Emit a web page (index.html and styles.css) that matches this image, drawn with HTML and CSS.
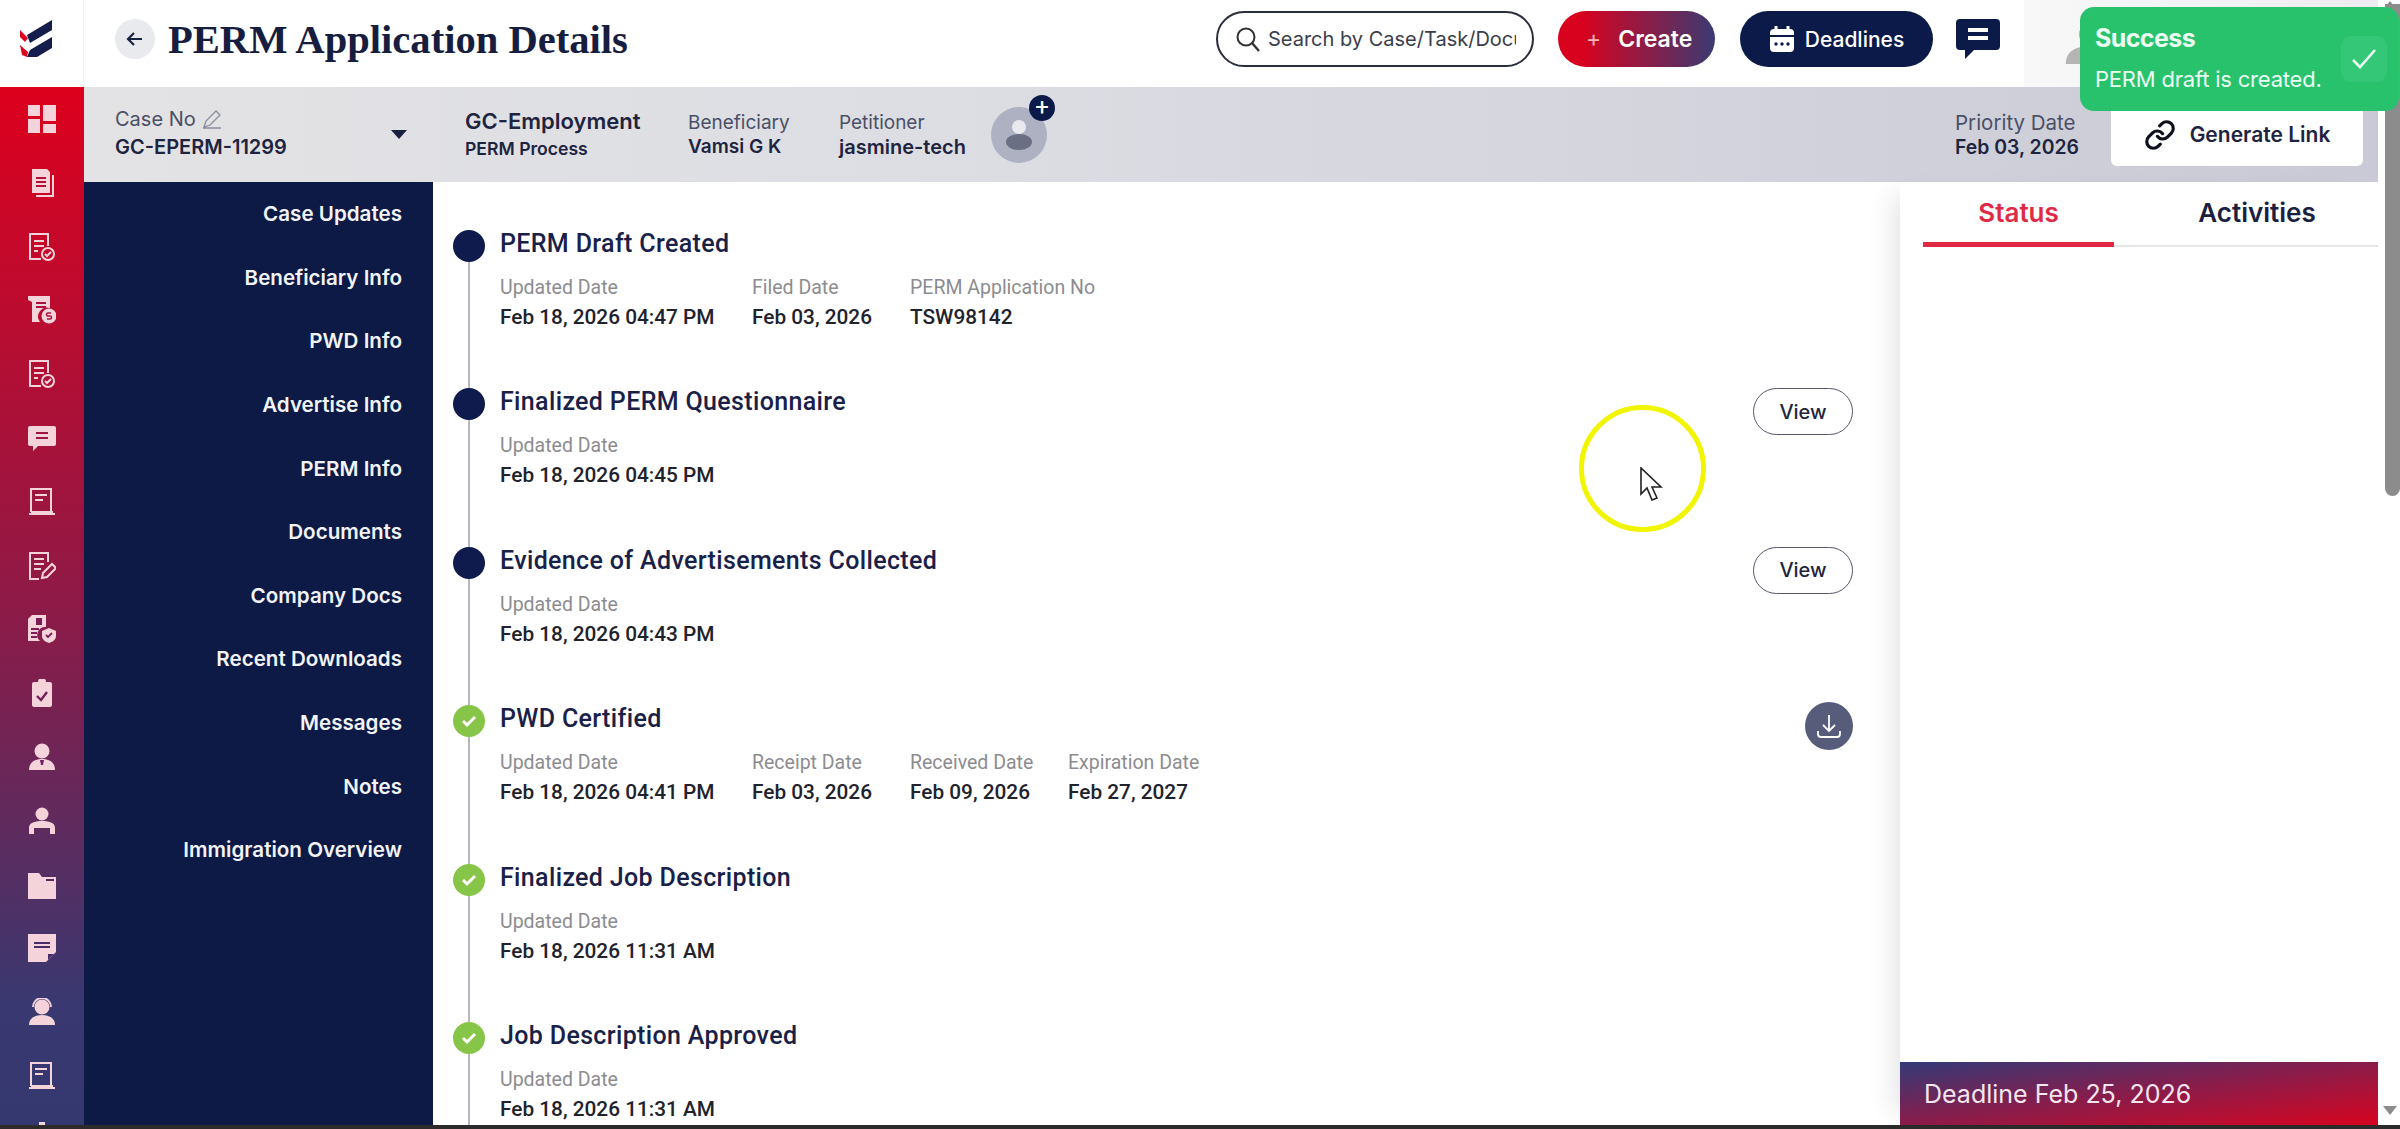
FILE: index.html
```html
<!DOCTYPE html>
<html lang="en">
<head>
    <meta charset="UTF-8">
    <title>PERM Application Details</title>
    <link rel="stylesheet" href="styles.css">
</head>
<body>
    <div class="shell">
        <div class="app">
            <div class="topbar">
                <div class="logo">
                    <svg width="36" height="42" viewBox="8 8 36 42">
                        <path d="M17 25L42 10V20L20 33Z" fill="#141d4c"/>
                        <path d="M20 40L42 27V38L27 47H17Z" fill="#141d4c"/>
                        <path d="M10 20L18 28L15 32L10 27Z" fill="#e0051f"/>
                        <path d="M10 35L18 42L17 47L12 45Z" fill="#e0051f"/>
                    </svg>
                </div>
                <div class="header">
                    <button class="back">
                        <svg width="20" height="20" viewBox="0 0 20 20"><path d="M17 10H4M9 4l-6 6 6 6" fill="none" stroke="#1a2244" stroke-width="2.2"/></svg>
                    </button>
                    <h1>PERM Application Details</h1>
                    <div class="search">
                        <svg width="28" height="28" viewBox="0 0 28 28"><circle cx="12" cy="12" r="8.5" fill="none" stroke="#333" stroke-width="2"/><path d="M18 18l7 8" stroke="#333" stroke-width="2.4"/></svg>
                        <span>Search by Case/Task/Docu</span>
                    </div>
                    <button class="btn-create"><span class="plus">+</span>Create</button>
                    <button class="btn-deadlines">
                        <svg width="26" height="28" viewBox="0 0 26 28"><path d="M7 1v4M19 1v4" stroke="#fff" stroke-width="3"/><rect x="1" y="4" width="24" height="23" rx="4" fill="#fff"/><rect x="1" y="10" width="24" height="2" fill="#0c1a4a"/><circle cx="7" cy="19" r="1.7" fill="#0c1a4a"/><circle cx="13" cy="19" r="1.7" fill="#0c1a4a"/><circle cx="19" cy="19" r="1.7" fill="#0c1a4a"/></svg>
                        Deadlines
                    </button>
                    <svg class="chat" width="44" height="40" viewBox="0 0 44 40"><path d="M4 0H40a4 4 0 0 1 4 4V27a4 4 0 0 1-4 4H18L9 40V31H4a4 4 0 0 1-4-4V4A4 4 0 0 1 4 0Z" fill="#0c1a4a"/><path d="M12 11H32M12 19H32" stroke="#fff" stroke-width="4"/></svg>
                    <div class="user">
                        <svg width="44" height="40" viewBox="0 0 50 46"><circle cx="30" cy="12" r="11" fill="#b5b5b5"/><path d="M4 46c0-14 10-20 26-20s20 6 20 20Z" fill="#b5b5b5"/></svg>
                    </div>
                </div>
            </div>
            <div class="below">
                <nav class="rail">
                    <svg class="ic" viewBox="0 0 28 28"><rect x="0" y="0" width="12" height="11"/><rect x="0" y="14" width="12" height="14"/><rect x="15" y="0" width="13" height="16"/><rect x="15" y="19" width="13" height="9"/></svg>
                    <svg class="ic" viewBox="0 0 28 28"><path d="M4 0H19L22 3V24H4Z"/><path d="M24 6h2V28H8v-2H24Z"/><path d="M8 9H18M8 13H18M8 17H18" stroke="#b5103a" stroke-width="2"/></svg>
                    <svg class="ic ln" viewBox="0 0 28 28"><path d="M20 13V1H2V26H13"/><path d="M6 8H16M6 13H16M6 18H10"/><circle cx="20" cy="21" r="6"/><path d="M17 21l2 2 4-4"/></svg>
                    <svg class="ic" viewBox="0 0 28 28"><path d="M0 0H22V12A9 9 0 0 0 12 26H4V6L0 4Z"/><path d="M8 7H18M8 11H18" stroke="#a81340" stroke-width="2"/><circle cx="21" cy="20" r="7.5"/><path d="M23 17h-3a1.500 1.500 0 0 0 0 3h2a1.500 1.500 0 0 1 0 3h-3" fill="none" stroke="#a81340" stroke-width="1.500"/></svg>
                    <svg class="ic ln" viewBox="0 0 28 28"><path d="M20 13V1H2V26H13"/><path d="M6 8H16M6 13H16M6 18H10"/><circle cx="20" cy="21" r="6"/><path d="M17 21l2 2 4-4"/></svg>
                    <svg class="ic" viewBox="0 0 28 28"><path d="M2 2H26a2 2 0 0 1 2 2V20a2 2 0 0 1-2 2H10L5 27V22H2a2 2 0 0 1-2-2V4A2 2 0 0 1 2 2Z"/><path d="M8 9H20M8 14H20" stroke="#9a1745" stroke-width="2"/></svg>
                    <svg class="ic ln" viewBox="0 0 28 28"><path d="M3 24V1H23V23"/><path d="M7 7H19M7 12H15"/><path d="M1 26H27M3 24H25"/></svg>
                    <svg class="ic ln" viewBox="0 0 28 28"><path d="M20 10V1H2V27H11"/><path d="M6 7H16M6 12H16M6 17H13"/><path d="M14 26l1-5 9-9 4 4-9 9Z"/></svg>
                    <svg class="ic" viewBox="0 0 28 28"><path d="M0 4L4 0H18V12A8 8 0 0 0 12 26H0Z"/><rect x="8" y="3" width="6" height="7" fill="#7e1d55"/><path d="M3 14H11M3 18H9M3 22H9" stroke="#7e1d55" stroke-width="1.800"/><path d="M21 13l7 3v5c0 4-4 6-7 7-3-1-7-3-7-7v-5Z"/><path d="M18 20l2 2 4-4" fill="none" stroke="#7e1d55" stroke-width="1.800"/></svg>
                    <svg class="ic" viewBox="0 0 28 28"><path d="M6 3H10a4 4 0 0 1 8 0H22a2 2 0 0 1 2 2V26a2 2 0 0 1-2 2H6a2 2 0 0 1-2-2V5A2 2 0 0 1 6 3Z"/><path d="M9 17l4 4 6-8" fill="none" stroke="#751f5a" stroke-width="2.400"/></svg>
                    <svg class="ic" viewBox="0 0 28 28"><circle cx="14" cy="8" r="7.500"/><path d="M1 27c0-8 6-11 13-11s13 3 13 11Z"/><path d="M12 17h4l-1 5h-2Z" fill="#6f2260"/></svg>
                    <svg class="ic" viewBox="0 0 28 28"><circle cx="14" cy="7" r="6.500"/><path d="M1 27V21c0-5 5-7 13-7s13 2 13 7v6H22V21H6v6Z"/></svg>
                    <svg class="ic" viewBox="0 0 28 28"><path d="M0 2H11L14 6H28V28H0Z"/><path d="M18 9H26" stroke="#5d2665" stroke-width="2"/></svg>
                    <svg class="ic" viewBox="0 0 28 28"><path d="M0 0H28V18L18 28H0Z"/><path d="M6 9H22M6 13H22" stroke="#4a2c6a" stroke-width="2"/><path d="M20 20h6l-6 6Z" fill="#4a2c6a"/></svg>
                    <svg class="ic" viewBox="0 0 28 28"><circle cx="14" cy="9" r="7.500"/><path d="M5 9a9 9 0 0 1 18 0" fill="none" stroke="#f3d3dc" stroke-width="2"/><path d="M1 27c0-7 6-10 13-10s13 3 13 10Z"/></svg>
                    <svg class="ic ln" viewBox="0 0 28 28"><path d="M3 24V1H23V23"/><path d="M7 7H19M7 12H15"/><path d="M1 26H27M3 24H25"/></svg>
                    <svg class="ic last" viewBox="0 0 28 28"><path d="M11 0h6v3h7v4H4V3h7Z"/></svg>
                </nav>
                <div class="workspace">
                    <div class="casebar">
                        <div class="field case-no">
                            <span class="lbl">Case No
                                <svg width="20" height="20" viewBox="0 0 20 20"><path d="M2 18l2-6L14 2l4 4L8 16Zm-1 1H19" fill="none" stroke="#8a8d9e" stroke-width="1.300"/></svg>
                            </span>
                            <span class="val">GC-EPERM-11299</span>
                        </div>
                        <div class="caret"></div>
                        <div class="field process">
                            <span class="val big">GC-Employment</span>
                            <span class="val small">PERM Process</span>
                        </div>
                        <div class="field beneficiary">
                            <span class="lbl">Beneficiary</span>
                            <span class="val">Vamsi G K</span>
                        </div>
                        <div class="field petitioner">
                            <span class="lbl">Petitioner</span>
                            <span class="val">jasmine-tech</span>
                        </div>
                        <div class="avatar">
                            <svg width="34" height="36" viewBox="0 0 34 36"><circle cx="17" cy="10" r="7" fill="#e8e8ee"/><ellipse cx="17" cy="25" rx="13" ry="8" fill="#6b6f83"/></svg>
                            <span class="avatar-add">+</span>
                        </div>
                        <div class="spacer"></div>
                        <div class="field priority">
                            <span class="lbl">Priority Date</span>
                            <span class="val">Feb 03, 2026</span>
                        </div>
                        <div class="gen-link">
                            <svg width="32" height="32" viewBox="0 0 24 24"><g fill="none" stroke="#0d0f1c" stroke-width="2.400" stroke-linecap="round"><path d="M10 13a5 5 0 0 0 7.540.540l3-3a5 5 0 0 0-7.070-7.070l-1.720 1.710"/><path d="M14 11a5 5 0 0 0-7.540-.540l-3 3a5 5 0 0 0 7.070 7.070l1.710-1.710"/></g></svg>
                            Generate Link
                        </div>
                    </div>
                    <div class="content">
                        <div class="sidenav">
                            <a>Case Updates</a>
                            <a>Beneficiary Info</a>
                            <a>PWD Info</a>
                            <a>Advertise Info</a>
                            <a>PERM Info</a>
                            <a>Documents</a>
                            <a>Company Docs</a>
                            <a>Recent Downloads</a>
                            <a>Messages</a>
                            <a>Notes</a>
                            <a>Immigration Overview</a>
                        </div>
                        <div class="timeline">
                            <div class="item">
                                <div class="marker"><span class="dot"></span><span class="line"></span></div>
                                <div class="body">
                                    <h3>PERM Draft Created</h3>
                                    <div class="cols">
                                        <div class="col c1"><label>Updated Date</label><b>Feb 18, 2026 04:47 PM</b></div>
                                        <div class="col c2"><label>Filed Date</label><b>Feb 03, 2026</b></div>
                                        <div class="col c3"><label>PERM Application No</label><b>TSW98142</b></div>
                                    </div>
                                </div>
                            </div>
                            <div class="item">
                                <div class="marker"><span class="dot"></span><span class="line"></span></div>
                                <div class="body">
                                    <h3>Finalized PERM Questionnaire</h3>
                                    <div class="cols"><div class="col c1"><label>Updated Date</label><b>Feb 18, 2026 04:45 PM</b></div></div>
                                </div>
                                <button class="view">View</button>
                            </div>
                            <div class="item">
                                <div class="marker"><span class="dot"></span><span class="line"></span></div>
                                <div class="body">
                                    <h3>Evidence of Advertisements Collected</h3>
                                    <div class="cols"><div class="col c1"><label>Updated Date</label><b>Feb 18, 2026 04:43 PM</b></div></div>
                                </div>
                                <button class="view">View</button>
                            </div>
                            <div class="item">
                                <div class="marker"><span class="dot done"><svg width="20" height="20" viewBox="0 0 20 20"><path d="M4 10l4 4 8-8" fill="none" stroke="#fff" stroke-width="3"/></svg></span><span class="line"></span></div>
                                <div class="body">
                                    <h3>PWD Certified</h3>
                                    <div class="cols">
                                        <div class="col c1"><label>Updated Date</label><b>Feb 18, 2026 04:41 PM</b></div>
                                        <div class="col c2"><label>Receipt Date</label><b>Feb 03, 2026</b></div>
                                        <div class="col c3"><label>Received Date</label><b>Feb 09, 2026</b></div>
                                        <div class="col c4"><label>Expiration Date</label><b>Feb 27, 2027</b></div>
                                    </div>
                                </div>
                                <button class="download">
                                    <svg width="28" height="28" viewBox="0 0 28 28"><path d="M14 3V19M8 13l6 6 6-6M3 19v3a3 3 0 0 0 3 3H22a3 3 0 0 0 3-3V19" fill="none" stroke="#fff" stroke-width="1.800"/></svg>
                                </button>
                            </div>
                            <div class="item">
                                <div class="marker"><span class="dot done"><svg width="20" height="20" viewBox="0 0 20 20"><path d="M4 10l4 4 8-8" fill="none" stroke="#fff" stroke-width="3"/></svg></span><span class="line"></span></div>
                                <div class="body">
                                    <h3>Finalized Job Description</h3>
                                    <div class="cols"><div class="col c1"><label>Updated Date</label><b>Feb 18, 2026 11:31 AM</b></div></div>
                                </div>
                            </div>
                            <div class="item">
                                <div class="marker"><span class="dot done"><svg width="20" height="20" viewBox="0 0 20 20"><path d="M4 10l4 4 8-8" fill="none" stroke="#fff" stroke-width="3"/></svg></span><span class="line"></span></div>
                                <div class="body">
                                    <h3>Job Description Approved</h3>
                                    <div class="cols"><div class="col c1"><label>Updated Date</label><b>Feb 18, 2026 11:31 AM</b></div></div>
                                </div>
                            </div>
                        </div>
                        <aside class="panel">
                            <div class="tabs">
                                <div class="tab active">Status</div>
                                <div class="tab">Activities</div>
                            </div>
                            <div class="panel-fill"></div>
                            <div class="deadline">Deadline Feb 25, 2026</div>
                        </aside>
                    </div>
                </div>
            </div>
        </div>
        <div class="scrollbar">
            <span class="arrow-up"></span>
            <span class="thumb"></span>
            <span class="arrow-down"></span>
        </div>
    </div>
    <div class="taskbar"></div>

    <div class="toast">
        <div class="toast-text">
            <strong>Success</strong>
            <span>PERM draft is created.</span>
        </div>
        <div class="toast-check">
            <svg width="28" height="24" viewBox="0 0 28 24"><path d="M3 13l7 7L25 3" fill="none" stroke="#eafff2" stroke-width="2.600"/></svg>
        </div>
    </div>

    <div class="cursor-ring"></div>
    <svg class="pointer" width="24" height="36" viewBox="0 0 24 36"><path d="M2 1V27L8 21L13 33L18 31L13 20H22Z" fill="#fff" stroke="#222" stroke-width="1.600"/></svg>
</body>
</html>
```

FILE: styles.css
```css
* {
    box-sizing: border-box;
}

html, body {
    height: 100%;
    margin: 0;
    overflow: hidden;
    background: #fff;
    font-family: "Roboto", "Liberation Sans", sans-serif;
    color: #12193a;
}

button {
    font-family: inherit;
    border: 0;
    padding: 0;
}

.shell {
    display: flex;
    height: 1125px;
}

.app {
    width: 2378px;
    display: flex;
    flex-direction: column;
}

.taskbar {
    height: 4px;
    background: #2b2b2b;
}

/* top row */
.topbar {
    height: 87px;
    display: flex;
    flex: none;
}

.logo {
    width: 84px;
    padding: 18px 0 0 18px;
    border-right: 1px solid #efeff2;
}

.header {
    flex: 1;
    display: flex;
    align-items: center;
    padding: 0 0 9px 31px;
    min-width: 0;
}

.back {
    width: 40px;
    height: 40px;
    border-radius: 50%;
    background: #e9eaee;
    display: flex;
    align-items: center;
    justify-content: center;
    margin-right: 13px;
}

h1 {
    margin: 0;
    width: 1048px;
    flex: none;
    font-family: "Liberation Serif", serif;
    font-size: 40.600px;
    font-weight: 700;
    color: #161d3f;
    white-space: nowrap;
}

.search {
    width: 318px;
    height: 56px;
    flex: none;
    border: 2px solid #2a2d3e;
    border-radius: 28px;
    display: flex;
    align-items: center;
    gap: 6px;
    padding: 0 16px;
    font-family: "Inter", sans-serif;
    font-size: 20px;
    color: #3b3e4c;
    overflow: hidden;
    white-space: nowrap;
}

.search span {
    width: 250px;
    overflow: hidden;
}

.search svg {
    flex: none;
}

.btn-create {
    width: 157px;
    height: 56px;
    margin-left: 24px;
    border-radius: 28px;
    background: linear-gradient(90deg, #d8021f 15%, #3a3a72);
    color: #fff;
    font-family: "Inter", sans-serif;
    font-size: 23px;
    font-weight: 600;
    display: flex;
    align-items: center;
    padding-left: 28px;
    gap: 17px;
}

.plus {
    color: #ffb3b8;
    font-weight: 400;
}

.btn-deadlines {
    width: 193px;
    height: 56px;
    margin-left: 25px;
    border-radius: 28px;
    background: #0c1a4a;
    color: #fff;
    font-family: "Inter", sans-serif;
    font-size: 21px;
    font-weight: 500;
    display: flex;
    align-items: center;
    justify-content: center;
    gap: 10px;
}

.chat {
    margin-left: 23px;
    flex: none;
}

.user {
    margin-left: 24px;
    flex: 1;
    align-self: flex-start;
    height: 87px;
    background: linear-gradient(90deg, #f8f8f9, #eeecf0);
    display: flex;
    align-items: center;
    padding-left: 38px;
}

/* below the top row */
.below {
    flex: 1;
    display: flex;
    min-height: 0;
}

.rail {
    width: 84px;
    flex: none;
    overflow: hidden;
    display: flex;
    flex-direction: column;
    align-items: center;
    gap: 35.800px;
    padding-top: 18px;
    background: linear-gradient(180deg, #dd001d 0%, #8e1a47 50%, #3a3870 88%, #34386f 100%);
}

.ic {
    width: 28px;
    height: 28px;
    flex: none;
    fill: #f4d3da;
}

.ic.ln {
    fill: none;
    stroke: #f4d3da;
    stroke-width: 2;
}

.ic.last {
    margin-top: -4px;
}

.workspace {
    flex: 1;
    display: flex;
    flex-direction: column;
    min-width: 0;
}

.casebar {
    height: 95px;
    flex: none;
    display: flex;
    align-items: center;
    background: linear-gradient(90deg, #e3e3e5 0%, #dcdde3 40%, #c9cad5 100%);
    padding-left: 31px;
}

.field {
    display: flex;
    flex-direction: column;
    flex: none;
    gap: 3px;
}

.lbl {
    font-family: "Inter", sans-serif;
    font-size: 19px;
    color: #4b4f66;
    display: flex;
    align-items: center;
    gap: 6px;
    height: 22px;
    white-space: nowrap;
}

.val {
    font-family: "Inter", sans-serif;
    font-size: 20px;
    font-weight: 600;
    color: #1e2440;
    line-height: 22px;
    white-space: nowrap;
}

.val.big {
    font-size: 22px;
}

.val.small {
    font-size: 17.600px;
}

.case-no {
    width: 276px;
    gap: 6px;
    margin-top: -3px;
}

.case-no .lbl {
    font-size: 20px;
}

.caret {
    width: 0;
    height: 0;
    border: 8px solid transparent;
    border-top: 9px solid #1a2040;
    border-bottom: 0;
    margin-right: 58px;
}

.process {
    width: 223px;
    gap: 6px;
}

.beneficiary {
    width: 151px;
}

.beneficiary .val {
    font-size: 19px;
}

.petitioner {
    width: 151px;
}

.avatar {
    width: 56px;
    height: 56px;
    border-radius: 50%;
    background: #aeb1c2;
    position: relative;
    display: flex;
    align-items: center;
    justify-content: center;
    margin-left: 1px;
}

.avatar-add {
    position: absolute;
    top: -12px;
    right: -8px;
    width: 26px;
    height: 26px;
    border-radius: 50%;
    background: #0c1a4a;
    color: #fff;
    font-size: 24px;
    line-height: 25px;
    text-align: center;
}

.spacer {
    flex: 1;
}

.priority {
    width: 156px;
}

.priority .lbl {
    font-size: 20.500px;
}

.priority .val {
    font-size: 19.400px;
}

.gen-link {
    width: 252px;
    height: 63px;
    flex: none;
    margin-right: 15px;
    background: #fff;
    border-radius: 0 0 6px 6px;
    display: flex;
    align-items: center;
    justify-content: center;
    gap: 14px;
    font-family: "Inter", sans-serif;
    font-size: 21px;
    font-weight: 600;
    color: #1e2440;
}

.content {
    flex: 1;
    display: flex;
    min-height: 0;
}

.sidenav {
    width: 349px;
    flex: none;
    background: #0c1a45;
    display: flex;
    flex-direction: column;
}

.sidenav a {
    height: 63.600px;
    flex: none;
    padding-right: 31px;
    display: flex;
    align-items: center;
    justify-content: flex-end;
    font-family: "Inter", sans-serif;
    font-size: 20.600px;
    font-weight: 600;
    color: #f2f3f8;
}

/* timeline */
.timeline {
    flex: 1;
    min-width: 0;
    overflow: hidden;
    padding: 48px 47px 0 20px;
}

.item {
    height: 158.400px;
    display: flex;
    align-items: flex-start;
}

.marker {
    width: 32px;
    height: 100%;
    flex: none;
    display: flex;
    flex-direction: column;
    align-items: center;
    margin-right: 15px;
}

.dot {
    width: 32px;
    height: 32px;
    flex: none;
    border-radius: 50%;
    background: #0f1b4c;
    display: flex;
    align-items: center;
    justify-content: center;
}

.dot.done {
    background: #86c547;
}

.line {
    flex: 1;
    width: 2px;
    background: #b4b7c4;
}

.body {
    flex: 1;
    min-width: 0;
}

h3 {
    margin: 0;
    height: 32px;
    line-height: 28px;
    font-size: 25px;
    font-weight: 500;
    letter-spacing: 0.35px;
    color: #192148;
}

.cols {
    display: flex;
    margin-top: 14px;
}

.col {
    display: flex;
    flex-direction: column;
    flex: none;
}

.c1 {
    width: 252px;
}

.c2,
.c3 {
    width: 158px;
}

label {
    font-size: 19.500px;
    line-height: 24px;
    color: #8c8c90;
    white-space: nowrap;
}

b {
    font-size: 20.800px;
    font-weight: 500;
    line-height: 30px;
    margin-top: 2px;
    color: #21222c;
    white-space: nowrap;
}

.view {
    width: 100px;
    height: 47px;
    flex: none;
    margin-top: 0;
    border: 1.500px solid #55586a;
    border-radius: 24px;
    background: #fff;
    font-family: "Inter", sans-serif;
    font-size: 20px;
    font-weight: 500;
    color: #22263c;
}

.download {
    width: 48px;
    height: 48px;
    flex: none;
    margin-top: -3px;
    border-radius: 50%;
    background: #565c79;
    display: flex;
    align-items: center;
    justify-content: center;
}

/* right panel */
.panel {
    width: 478px;
    flex: none;
    display: flex;
    flex-direction: column;
    background: #fff;
    box-shadow: -22px 0 24px -14px rgba(0, 0, 0, 0.1);
}

.tabs {
    height: 65px;
    flex: none;
    margin-left: 23px;
    display: flex;
    border-bottom: 2px solid #e6e6ea;
}

.tab {
    flex: none;
    width: 191px;
    padding-top: 15px;
    text-align: center;
    font-family: "Inter", sans-serif;
    font-size: 26px;
    font-weight: 600;
    color: #1a2040;
}

.tab + .tab {
    width: 286px;
}

.tab.active {
    color: #df2a45;
    height: 65px;
    border-bottom: 5px solid #e02a44;
}

.panel-fill {
    flex: 1;
}

.deadline {
    height: 63px;
    flex: none;
    padding-left: 24px;
    display: flex;
    align-items: center;
    font-family: "Inter", sans-serif;
    font-size: 25px;
    color: #f5e6ee;
    background: linear-gradient(to bottom right, #333a78 0%, #8a1c4a 50%, #d8041f 100%);
}

/* browser scrollbar */
.scrollbar {
    width: 22px;
    flex: none;
    display: flex;
    flex-direction: column;
    align-items: center;
    background: #fff;
    position: relative;
}

.thumb {
    width: 15px;
    height: 492px;
    margin-top: 4px;
    margin-left: 6px;
    border-radius: 0 0 8px 8px;
    background: #8c8c8c;
}

.arrow-up,
.arrow-down {
    position: absolute;
    left: 5px;
    width: 0;
    height: 0;
    border: 7px solid transparent;
}

.arrow-up {
    top: 1px;
    border-top: 0;
    border-bottom: 9px solid #8c8c8c;
}

.arrow-down {
    bottom: 10px;
    border-bottom: 0;
    border-top: 9px solid #8c8c8c;
}

/* overlays */
.toast {
    position: absolute;
    top: 7px;
    left: 2080px;
    width: 319px;
    height: 104px;
    border-radius: 14px;
    background: #28c26d;
    color: #eafff2;
    display: flex;
    align-items: center;
    justify-content: space-between;
    padding: 0 12px 0 15px;
}

.toast-text {
    display: flex;
    flex-direction: column;
    gap: 13px;
    margin-top: -3px;
}

.toast-text strong {
    font-family: "Inter", sans-serif;
    font-size: 25px;
    font-weight: 700;
    letter-spacing: -0.6px;
}

.toast-text span {
    font-family: "Inter", sans-serif;
    font-size: 22px;
    letter-spacing: -0.2px;
}

.toast-check {
    width: 46px;
    height: 46px;
    border-radius: 10px;
    background: #34c777;
    display: flex;
    align-items: center;
    justify-content: center;
}

.cursor-ring {
    position: absolute;
    left: 1579px;
    top: 405px;
    width: 127px;
    height: 127px;
    border: 5px solid #f2f500;
    border-radius: 50%;
}

.pointer {
    position: absolute;
    left: 1639px;
    top: 467px;
}
```
